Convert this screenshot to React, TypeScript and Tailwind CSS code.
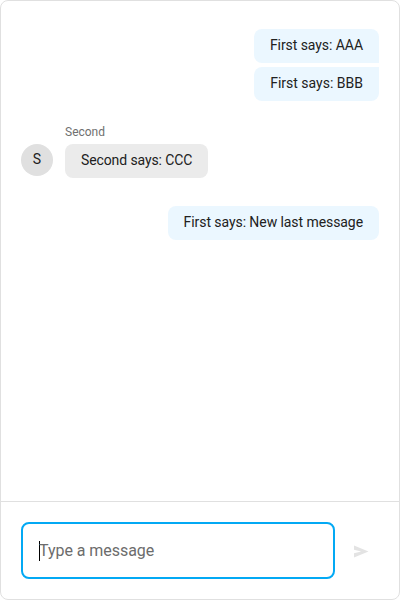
import React from "react";

type Message = { text: string; tracking?: string };
type Group = { own: boolean; author?: string; messages: Message[] };

const groups: Group[] = [
  {
    own: true,
    messages: [
      { text: "First says: AAA", tracking: "tracking-[-0.06px]" },
      { text: "First says: BBB" },
    ],
  },
  {
    own: false,
    author: "Second",
    messages: [{ text: "Second says: CCC", tracking: "tracking-[-0.11px]" }],
  },
  {
    own: true,
    messages: [{ text: "First says: New last message", tracking: "tracking-[-0.07px]" }],
  },
];

function OwnGroup({ messages }: { messages: Message[] }) {
  return (
    <div className="flex flex-col items-end gap-1">
      {messages.map((m, i) => (
        <div
          key={m.text}
          className={`h-[34px] bg-[#ebf7ff] px-4 pt-1.5 text-sm leading-5 rounded-l-lg ${m.tracking ?? ""} ${
            i === 0 ? "rounded-tr-lg" : "rounded-tr-none"
          } ${i === messages.length - 1 ? "rounded-br-lg" : "rounded-br-none"}`}
        >
          {m.text}
        </div>
      ))}
    </div>
  );
}

function OtherGroup({ author, messages }: { author: string; messages: Message[] }) {
  return (
    <div className="flex items-end gap-3">
      <div className="mb-0.5 flex size-8 items-center justify-center rounded-full bg-[#e0e0e0] pb-0.5 text-sm">
        {author[0]}
      </div>
      <div>
        <div className="mb-1 text-xs leading-4 text-[#707070]">{author}</div>
        {messages.map((m) => (
          <div
            key={m.text}
            className={`h-[34px] rounded-lg bg-[#ebebeb] px-4 pt-1.5 text-sm leading-5 ${m.tracking ?? ""}`}
          >
            {m.text}
          </div>
        ))}
      </div>
    </div>
  );
}

export default function App() {
  return (
    <div className="flex h-[600px] w-[400px] flex-col overflow-hidden rounded-lg border border-[#e0e0e0] bg-white font-['Roboto',sans-serif] text-[#212121]">
      <div className="flex flex-1 flex-col px-5 pt-7">
        <OwnGroup messages={groups[0].messages} />
        <div className="mt-[23px] mb-7">
          <OtherGroup author={groups[1].author!} messages={groups[1].messages} />
        </div>
        <OwnGroup messages={groups[2].messages} />
      </div>
      <div className="flex h-[98px] items-start border-t border-[#e0e0e0] pt-5 pl-5">
        <div className="flex h-[57px] w-[314px] items-center rounded-lg border-2 border-[#03a9f4] pl-4">
          <span className="h-5 w-px bg-black" />
          <span className="-ml-px text-base leading-6 tracking-[-0.05px] text-[#6c6c6c]">Type a message</span>
        </div>
        <svg className="mt-[21px] ml-[18px] size-4" viewBox="0 0 16 16" fill="#e3e3e3">
          <path d="M1 2.5 15.5 8.5 1 14.5V10.2L8.2 8.5 1 6.8Z" />
        </svg>
      </div>
    </div>
  );
}
